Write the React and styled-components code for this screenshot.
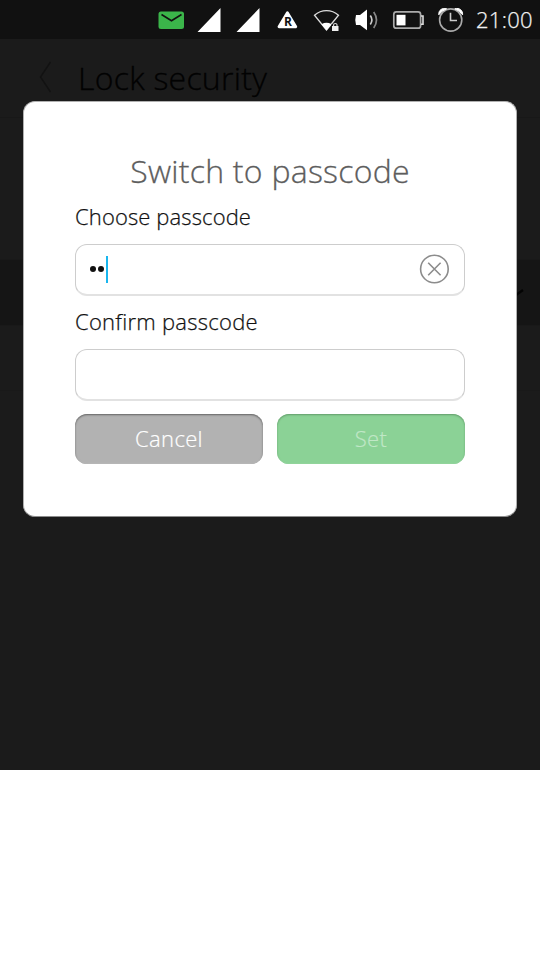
import styled, { createGlobalStyle } from "styled-components";

const GlobalStyle = createGlobalStyle`
  * {
    box-sizing: border-box;
  }

  body {
    margin: 0;
    background: #ffffff;
    font-family: "Open Sans", "Noto Sans", sans-serif;
    font-weight: 300;
  }
`;

const Screen = styled.div`
  position: relative;
  display: flex;
  flex-direction: column;
  width: 540px;
  height: 770px;
  overflow: hidden;
  background: #1b1b1b;
`;

const StatusBar = styled.header`
  display: flex;
  justify-content: flex-end;
  height: 39px;
  background: #111111;
`;

const Indicators = styled.svg`
  width: 322px;
  height: 39px;
  flex: none;
`;

const Clock = styled.time`
  width: 68px;
  padding-left: 4px;
  color: #f2f2f2;
  font-size: 22px;
  line-height: 39px;
  letter-spacing: 0.3px;
  white-space: nowrap;
  -webkit-text-stroke: 0.25px #f2f2f2;
`;

const PageHeader = styled.div`
  display: flex;
  height: 79px;
  padding-left: 39px;
  border-bottom: 1px solid #181818;
`;

const BackIcon = styled.svg`
  width: 13px;
  height: 32px;
  margin-top: 22px;
`;

const PageTitle = styled.h1`
  margin: 0 0 0 26px;
  color: #020202;
  font-size: 32px;
  font-weight: 300;
  line-height: 77px;
  letter-spacing: 0.25px;
  white-space: nowrap;
  -webkit-text-stroke: 0.3px #020202;
`;

const ListRow = styled.div`
  display: flex;
  align-items: center;
  justify-content: flex-end;
  height: ${(props) => props.$height}px;
  padding-right: 16px;
  background: ${(props) => (props.$selected ? "#151515" : "transparent")};
  border-bottom: 1px solid #191919;
`;

const Dialog = styled.section`
  position: absolute;
  top: 101px;
  left: 23px;
  width: 494px;
  height: 416px;
  padding: 46px 51px 0 51px;
  background: #ffffff;
  border: 1px solid #b0b0b0;
  border-bottom-color: #8c8c8c;
  border-radius: 12px;
`;

const DialogTitle = styled.h2`
  height: 46px;
  margin: 0;
  color: #5d5d5d;
  font-size: 32px;
  font-weight: 300;
  line-height: 46px;
  letter-spacing: 0.25px;
  text-align: center;
  white-space: nowrap;
  -webkit-text-stroke: 0.3px #5d5d5d;
`;

const Label = styled.label`
  display: block;
  height: ${(props) => props.$height}px;
  color: #111111;
  font-size: 22px;
  line-height: ${(props) => props.$line}px;
  letter-spacing: ${(props) => props.$spacing}px;
  white-space: nowrap;
  -webkit-text-stroke: 0.25px #111111;
`;

const Field = styled.div`
  display: flex;
  align-items: center;
  height: 52px;
  padding: 0 15px 0 14px;
  border: 1px solid #cdcdcd;
  border-bottom: 2px solid #e2e2e2;
  border-radius: 12px;
`;

const Bullet = styled.span`
  width: 6px;
  height: 6px;
  margin: 0 2px 1px 0;
  border-radius: 50%;
  background: #111111;
`;

const Caret = styled.span`
  width: 2px;
  height: 27px;
  background: #19b6ee;
`;

const ClearIcon = styled.svg`
  width: 30px;
  height: 30px;
  margin: 0 0 2px auto;
`;

const Actions = styled.div`
  display: flex;
  gap: 14px;
  margin-top: 13px;
`;

const Button = styled.button`
  width: 188px;
  height: 50px;
  padding: 0 0 3px;
  border: 0;
  border-radius: 12px;
  background: ${(props) => (props.$primary ? "#8bd296" : "#b2b2b2")};
  box-shadow: inset 0 1px 2px ${(props) => (props.$primary ? "#629b6a" : "#626262")},
    inset 0 -1px 1px ${(props) => (props.$primary ? "#95d79f" : "#bcbcbc")};
  color: ${(props) => (props.$primary ? "#c0e7c6" : "#ffffff")};
  font-family: inherit;
  font-size: 22px;
  font-weight: 300;
  letter-spacing: 0.35px;
  -webkit-text-stroke: 0.2px;
`;

function StatusIcons() {
  return (
    <Indicators viewBox="150 0 322 39" fill="none">
      <rect x="158.5" y="11.5" width="25.5" height="17.5" rx="2.5" fill="#3bb54a" />
      <path d="M161.5 14.5 171.5 20.7 181.5 14.5" stroke="#111" strokeWidth="1.6" />
      <path d="M197.5 32 220.5 8V32ZM236.5 32 259.5 8V32Z" fill="#fff" />
      <path
        d="M287.4 12.6 295.8 26.8H279Z"
        fill="#fff"
        stroke="#fff"
        strokeWidth="2.8"
        strokeLinejoin="round"
      />
      <text x="287.9" y="26.2" fill="#111" fontSize="12" fontWeight="700" textAnchor="middle">R</text>
      <path d="M314.5 15.2C321.5 9 331.5 9 338.5 15.2L326.5 30Z" stroke="#ddd" strokeWidth="1.3" />
      <path d="M321.5 24.2Q326.5 21.5 331.5 24.2L326.5 30.5Z" fill="#fff" />
      <rect x="331.2" y="24.5" width="8" height="7" fill="#111" />
      <rect x="332" y="26" width="6.5" height="5" fill="#eee" />
      <path d="M333.6 26V24.8C333.6 23 337 23 337 24.8V26" stroke="#ddd" strokeWidth="1.1" />
      <path d="M356 15H360L367 9.5V30.3L360 25H356Q354.5 20 356 15Z" fill="#fff" />
      <path d="M370.3 15.5Q373.5 20 370.3 24.5" stroke="#ccc" strokeWidth="1.7" />
      <path d="M373.7 12Q379.3 20 373.7 28" stroke="#888" strokeWidth="1.7" />
      <rect x="393.8" y="11.9" width="26.8" height="16.3" rx="2.5" stroke="#aaa" strokeWidth="1.7" />
      <rect x="396.5" y="14.8" width="9" height="10.6" fill="#fff" />
      <path d="M421 16H423V24.3H421" stroke="#ddd" strokeWidth="1.6" />
      <circle cx="450.7" cy="20" r="11.1" stroke="#aaa" strokeWidth="1.6" />
      <path d="M438.8 14.8C438.5 10 442 7.6 446.6 8.8Q441.5 10.6 438.8 14.8Z" fill="#fff" stroke="#fff" />
      <path d="M462.6 14.8C462.9 10 459.4 7.6 454.8 8.8Q459.9 10.6 462.6 14.8Z" fill="#fff" stroke="#fff" />
      <path d="M450.5 12.8V20.5H457" stroke="#ccc" strokeWidth="1.6" />
    </Indicators>
  );
}

function App() {
  return (
    <>
      <GlobalStyle />
      <Screen>
        <StatusBar>
          <StatusIcons />
          <Clock>21:00</Clock>
        </StatusBar>

        <PageHeader>
          <BackIcon viewBox="0 0 13 32" fill="none">
            <path d="M11.5 1 1.5 16 11.5 31" stroke="#121212" strokeWidth="1.4" />
          </BackIcon>
          <PageTitle>Lock security</PageTitle>
        </PageHeader>
        <ListRow $height={142} />
        <ListRow $height={66} $selected>
          <svg width="20" height="14" viewBox="0 0 20 14" fill="none">
            <path d="M2 6 8 12 19 4" stroke="#030303" strokeWidth="2.4" />
          </svg>
        </ListRow>
        <ListRow $height={65} />

        <Dialog>
          <DialogTitle>Switch to passcode</DialogTitle>
          <Label $height={50} $line={45} $spacing={0.12}>Choose passcode</Label>
          <Field>
            <Bullet />
            <Bullet />
            <Caret />
            <ClearIcon viewBox="0 0 30 30" fill="none" stroke="#8c8c8c" strokeWidth="1.6">
              <circle cx="15.4" cy="15" r="13.8" />
              <path d="M9.2 8.8 21.6 21.2M21.6 8.8 9.2 21.2" />
            </ClearIcon>
          </Field>
          <Label $height={53} $line={51} $spacing={0.27}>Confirm passcode</Label>
          <Field />
          <Actions>
            <Button>Cancel</Button>
            <Button $primary>Set</Button>
          </Actions>
        </Dialog>
      </Screen>
    </>
  );
}

export default App;
